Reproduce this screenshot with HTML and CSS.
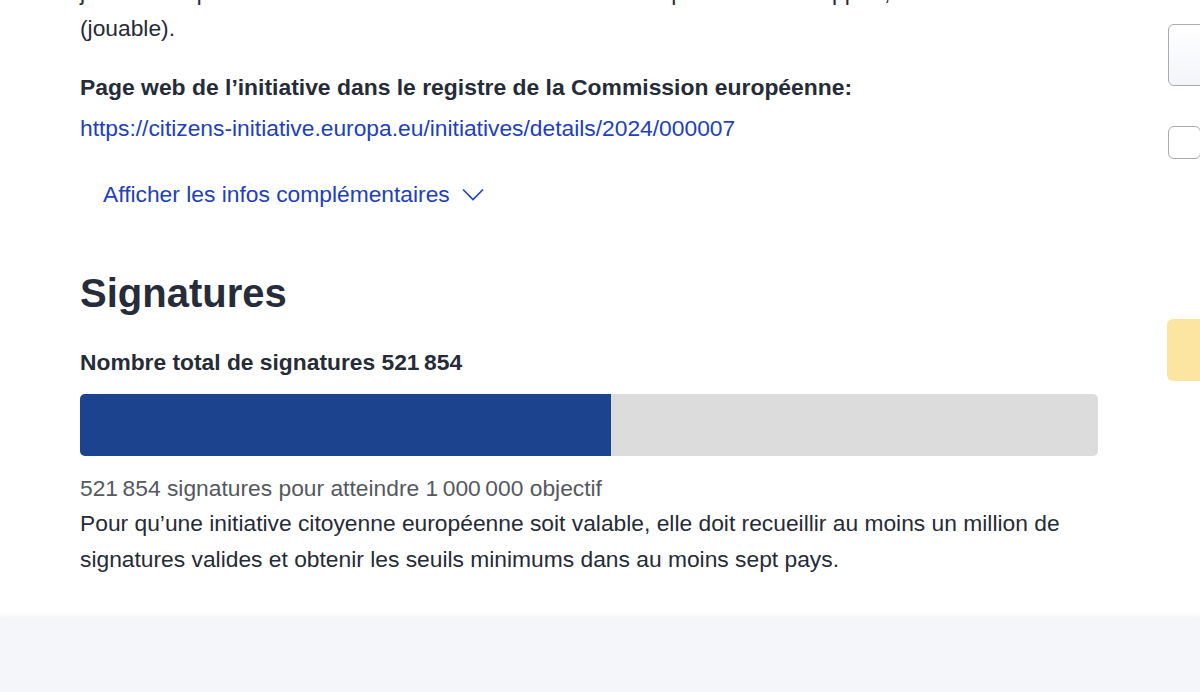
FILE: index.html
```html
<!DOCTYPE html>
<html lang="fr">
<head>
<meta charset="utf-8">
<title>Signatures</title>
<link rel="stylesheet" href="styles.css">
</head>
<body>
<div class="page">
  <div class="layout">
    <main class="main">
      <p class="intro">jeux vidéo qu'ils vendent restent dans un état fonctionnel après la fin du support, en état</p>
      <p class="intro">(jouable).</p>
      <p class="label">Page web de l’initiative dans le registre de la Commission européenne:</p>
      <a class="url" href="#">https://citizens-initiative.europa.eu/initiatives/details/2024/000007</a>
      <button class="more" type="button">Afficher les infos complémentaires
        <svg class="chev" width="22" height="13" viewBox="0 0 22 13"><path d="M1 1.5 L11 11.5 L21 1.5" fill="none" stroke="#1e40c0" stroke-width="1.6"/></svg>
      </button>
      <h2 class="title">Signatures</h2>
      <p class="total">Nombre total de signatures 521&#8239;854</p>
      <div class="bar"><div class="fill" style="width:52.19%"></div></div>
      <p class="goal">521&#8239;854 signatures pour atteindre 1&#8239;000&#8239;000 objectif</p>
      <p class="info">Pour qu’une initiative citoyenne européenne soit valable, elle doit recueillir au moins un million de signatures valides et obtenir les seuils minimums dans au moins sept pays.</p>
    </main>
    <aside class="side">
      <p class="side-label">Nom</p>
      <div class="input"></div>
      <div class="check"></div>
      <div class="notice"></div>
    </aside>
  </div>
  <div class="footer-band"></div>
</div>
</body>
</html>
```

FILE: styles.css
```css
html, body {
  margin: 0;
  padding: 0;
  background: #ffffff;
  overflow: hidden;
}
body {
  font-family: "Liberation Sans", Arial, Helvetica, sans-serif;
  color: #262b38;
  font-size: 22.8px;
}
.page {
  width: 1200px;
  height: 692px;
  overflow: hidden;
  display: flex;
  flex-direction: column;
}
.layout {
  display: flex;
  margin-top: -26px;
  padding-left: 80px;
  gap: 69px;
  height: 643px;
  flex: none;
}
.main {
  width: 1018px;
  flex: none;
  display: flex;
  flex-direction: column;
  align-items: flex-start;
}
.intro {
  margin: 0;
  line-height: 36px;
  white-space: nowrap;
}
.label {
  margin: 23px 0 0;
  font-weight: bold;
  line-height: 36px;
  font-size: 22.9px;
}
.url {
  margin-top: 5px;
  line-height: 36px;
  color: #1e40c0;
  text-decoration: none;
}
.more {
  margin: 30px 0 0 23px;
  padding: 0;
  border: 0;
  background: none;
  font: inherit;
  color: #1e40c0;
  line-height: 36px;
  display: flex;
  align-items: center;
  gap: 12px;
  cursor: pointer;
}
.chev { margin-top: 1px; }
.title {
  margin: 57px 0 0;
  font-size: 40px;
  line-height: 48px;
  font-weight: bold;
  color: #272c3a;
}
.total {
  margin: 27px 0 0;
  font-weight: bold;
  line-height: 36px;
}
.bar {
  margin-top: 14px;
  width: 1018px;
  height: 62px;
  background: #dcdcdc;
  border-radius: 5px;
  overflow: hidden;
  display: flex;
}
.fill {
  background: #1b438e;
  height: 100%;
}
.goal {
  margin: 16px 0 0;
  line-height: 32px;
  color: #55595f;
}
.info {
  margin: 1px 0 0;
  line-height: 36px;
  width: 1018px;
}
.side {
  width: 300px;
  flex: none;
  display: flex;
  flex-direction: column;
  align-items: flex-start;
}
.side-label {
  margin: 0;
  font-weight: bold;
  line-height: 36px;
}
.input {
  margin: 14px 0 0 1px;
  width: 280px;
  height: 60px;
  border: 1px solid #a9abb0;
  border-radius: 6px;
  background: linear-gradient(#ffffff, #f3f5fa);
}
.check {
  margin: 40px 0 0 1px;
  width: 31px;
  height: 31px;
  border: 1px solid #a9abb0;
  border-radius: 6px;
  background: #fff;
}
.notice {
  margin-top: 160px;
  width: 280px;
  height: 62px;
  background: #fbe5a0;
  border-radius: 6px;
}
.footer-band {
  flex: 1;
  background: #f5f6fa;
  box-shadow: 0 -1px 3px rgba(235, 237, 244, 0.6);
}
```
